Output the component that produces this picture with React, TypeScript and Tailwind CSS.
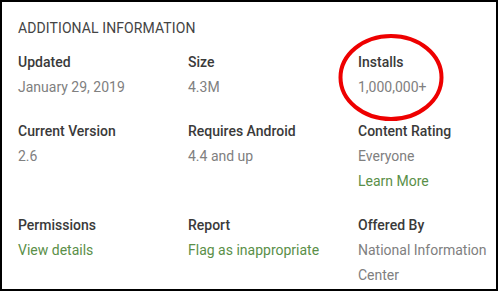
import React from "react";

type Item = {
  label: string;
  values: { text: string; link?: boolean }[];
  circled?: boolean;
};

const items: Item[] = [
  { label: "Updated", values: [{ text: "January 29, 2019" }] },
  { label: "Size", values: [{ text: "4.3M" }] },
  { label: "Installs", values: [{ text: "1,000,000+" }], circled: true },
  { label: "Current Version", values: [{ text: "2.6" }] },
  { label: "Requires Android", values: [{ text: "4.4 and up" }] },
  {
    label: "Content Rating",
    values: [{ text: "Everyone" }, { text: "Learn More", link: true }],
  },
  { label: "Permissions", values: [{ text: "View details", link: true }] },
  { label: "Report", values: [{ text: "Flag as inappropriate", link: true }] },
  {
    label: "Offered By",
    values: [{ text: "National Information" }, { text: "Center" }],
  },
];

export default function App() {
  return (
    <div className="w-[499px] h-[292px] bg-white">
      <div
        className="w-[498px] h-[291px] border-2 border-black bg-white pt-4 pl-4 text-[14px]"
        style={{ fontFamily: "Roboto, 'Liberation Sans', sans-serif" }}
      >
        <h2 className="leading-[20px] text-[#444444] uppercase tracking-[0.1px] mb-[11px]">
          Additional Information
        </h2>
        <div className="grid grid-cols-[170px_170px_150px] gap-y-[18px]">
          {items.map((item) => (
            <div key={item.label} className="relative flex flex-col">
              {item.circled && (
                <svg
                  className="absolute left-[-20px] top-[-15px] pointer-events-none"
                  width="106"
                  height="87"
                  viewBox="0 0 106 87"
                >
                  <ellipse
                    cx="53"
                    cy="43.5"
                    rx="50.5"
                    ry="41.5"
                    fill="none"
                    stroke="#ee0000"
                    strokeWidth="4"
                  />
                </svg>
              )}
              <span className="leading-[26px] font-medium text-[#3a3a3a]">
                {item.label}
              </span>
              {item.values.map((v) => (
                <span
                  key={v.text}
                  className={`leading-[25px] ${
                    v.link ? "text-[#5a8f48]" : "text-[#808080]"
                  }`}
                >
                  {v.text}
                </span>
              ))}
            </div>
          ))}
        </div>
      </div>
    </div>
  );
}
